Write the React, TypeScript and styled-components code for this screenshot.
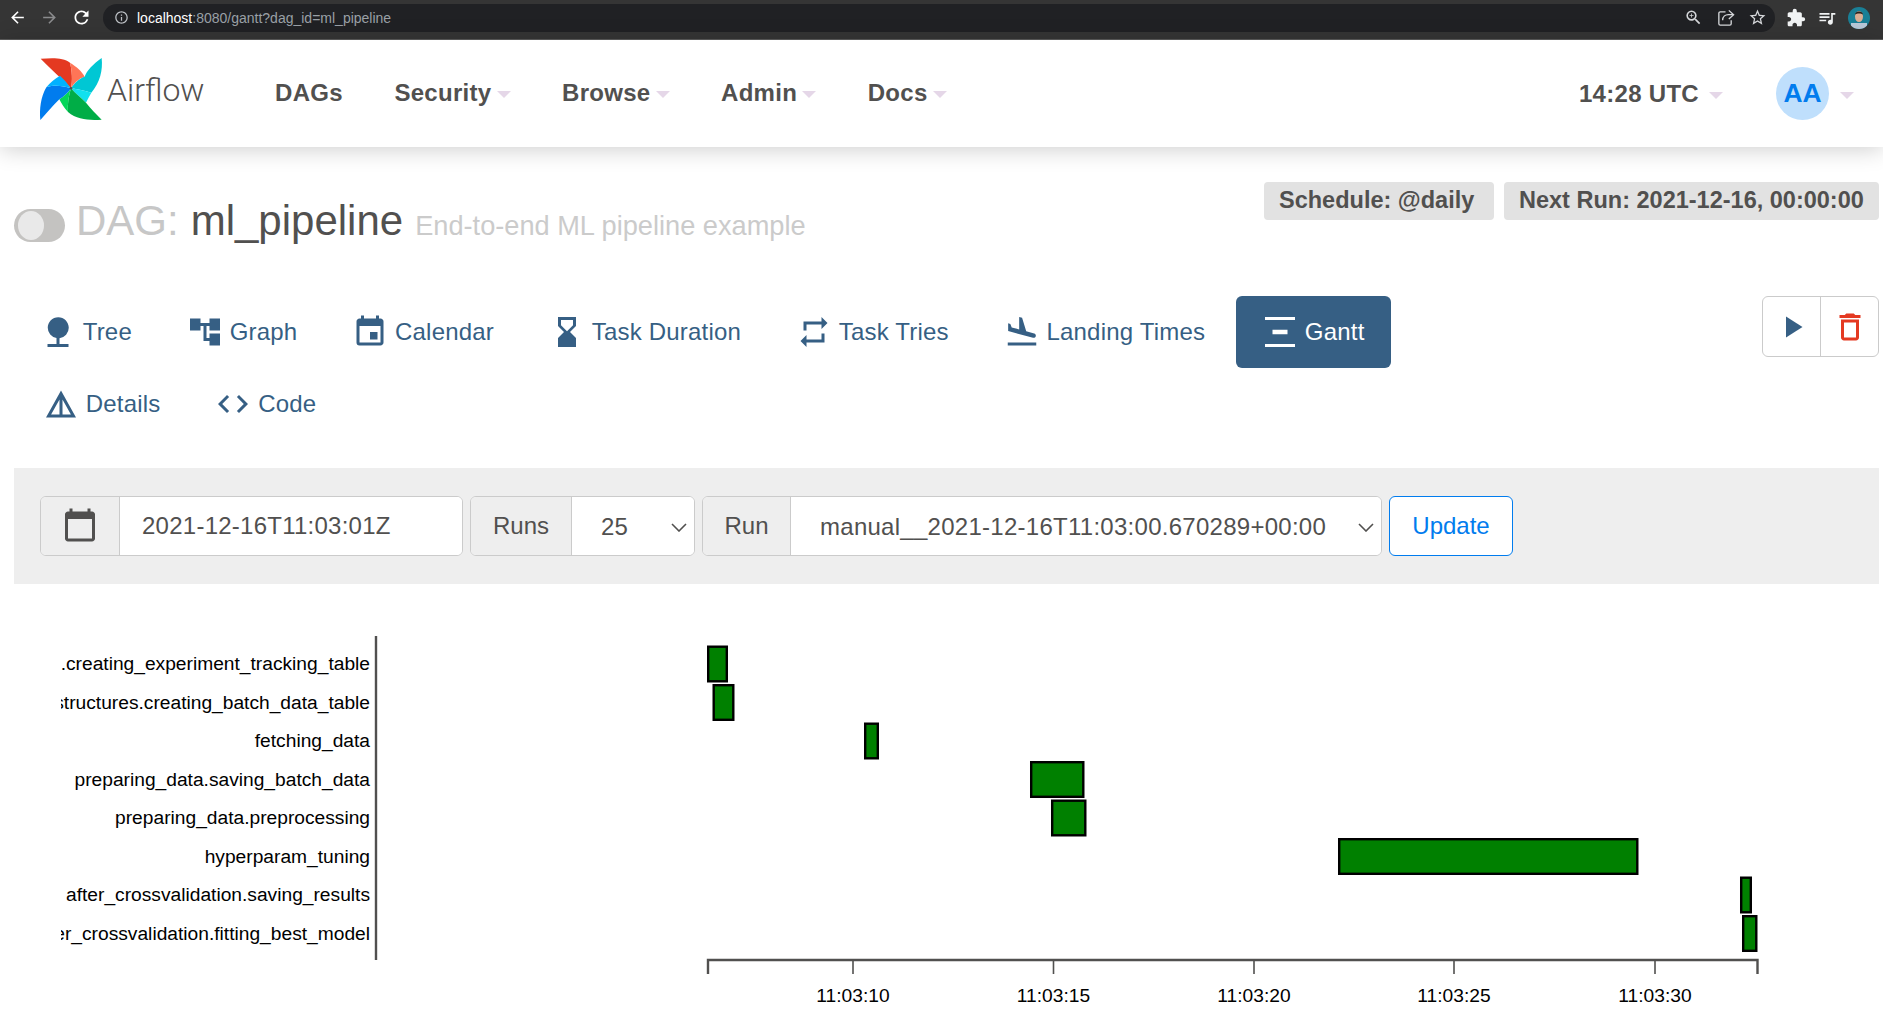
import React from "react";
import styled, { createGlobalStyle } from "styled-components";
import {
  MdAccountTree,
  MdArrowBack,
  MdArrowForward,
  MdCalendarToday,
  MdCode,
  MdDeleteOutline,
  MdDetails,
  MdEvent,
  MdExtension,
  MdFlightLand,
  MdHourglassBottom,
  MdInfoOutline,
  MdNature,
  MdPlayArrow,
  MdQueueMusic,
  MdRefresh,
  MdRepeat,
  MdStarBorder,
  MdVerticalDistribute,
  MdZoomIn,
} from "react-icons/md";

const Global = createGlobalStyle`
  html, body { margin: 0; padding: 0; height: 1011px; overflow: hidden; background: #fff; }
  body { font-family: "Liberation Sans", Arial, sans-serif; color: #51504f; }
  * { box-sizing: border-box; }
`;

const Page = styled.div`
  width: 1883px;
  height: 1011px;
  overflow: hidden;
`;

const BrowserBar = styled.div`
  height: 40px;
  background: #353535;
  border-bottom: 1px solid #5c5c5c;
  display: flex;
  align-items: center;
  padding: 0 9px 4px 1px;
  color: #fff;
`;

const BrowserButton = styled.span<{ $dim?: boolean }>`
  width: 32px;
  display: flex;
  justify-content: center;
  color: ${(p) => (p.$dim ? "#8a8b8d" : "#fff")};
`;

const Omnibox = styled.div`
  margin-left: 6px;
  width: 1672px;
  height: 28px;
  border-radius: 14px;
  background: #202124;
  display: flex;
  align-items: center;
  padding: 0 8px 0 11px;
`;

const InfoIcon = styled.span`
  display: flex;
  color: #bdc1c6;
  margin-right: 8px;
`;

const UrlHost = styled.span`
  color: #fff;
  font-size: 14px;
`;

const UrlRest = styled.span`
  color: #9aa0a6;
  font-size: 14px;
`;

const OmniIcons = styled.div`
  margin-left: auto;
  display: flex;
  gap: 13px;
  color: #d5d7da;
`;

const ExtensionIcons = styled.div`
  display: flex;
  align-items: center;
  margin-left: 11px;
  gap: 11px;
  color: #f1f3f4;
`;

const Navbar = styled.nav`
  position: relative;
  height: 107px;
  background: #fff;
  box-shadow: 0 2px 22px rgba(0, 0, 0, 0.2);
  display: flex;
  align-items: center;
  padding: 0 29px 0 40px;
`;

const Brand = styled.div`
  display: flex;
  align-items: center;
  width: 235px;
  margin-top: -7px;
`;

const BrandName = styled.span`
  font-family: Roboto, "Liberation Sans", sans-serif;
  font-size: 32px;
  font-weight: 300;
  color: #51504f;
  margin-left: 4px;
  margin-top: 0;
`;

const Menu = styled.div`
  display: flex;
  align-items: center;
  gap: 51.5px;
  margin-top: -2px;
`;

const MenuItem = styled.span`
  display: inline-flex;
  align-items: center;
  font-size: 24px;
  font-weight: 700;
  letter-spacing: 0.3px;
  color: #51504f;
`;

const Caret = styled.i<{ $gap?: number }>`
  display: inline-block;
  width: 0;
  height: 0;
  margin-left: ${(p) => p.$gap ?? 5}px;
  margin-top: 4px;
  border-left: 7px solid transparent;
  border-right: 7px solid transparent;
  border-top: 7px solid #e5d7e8;
`;

const NavRight = styled.div`
  margin-left: auto;
  display: flex;
  align-items: center;
`;

const Avatar = styled.span`
  width: 53px;
  height: 53px;
  margin-left: 53px;
  border-radius: 50%;
  background: #bfdffc;
  color: #017cee;
  font-size: 26.4px;
  font-weight: 700;
  display: flex;
  align-items: center;
  justify-content: center;
`;

const Content = styled.main`
  padding: 35px 4px 0 14px;
`;

const TitleRow = styled.div`
  display: flex;
  justify-content: space-between;
  align-items: flex-start;
  height: 114px;
`;

const Title = styled.h4`
  margin: 16px 0 0;
  display: flex;
  align-items: baseline;
  font-size: 42px;
  font-weight: 400;
  line-height: 46px;
  color: #c7c7c7;
`;

const Toggle = styled.span`
  align-self: center;
  width: 51px;
  height: 33px;
  margin-top: 4px;
  margin-right: 11px;
  border-radius: 17px;
  background: #c4c3c1;
  display: flex;
  align-items: center;
  padding-left: 4px;
`;

const Knob = styled.span`
  width: 26px;
  height: 29px;
  border-radius: 50%;
  background: #e9e9e9;
`;

const DagName = styled.span`
  color: #51504f;
  margin-left: 12px;
`;

const Subtitle = styled.small`
  font-size: 27.2px;
  color: #cbcbcb;
  margin-left: 12px;
`;

const Badges = styled.div`
  display: flex;
  gap: 10px;
`;

const Badge = styled.span<{ $width: number }>`
  width: ${(p) => p.$width}px;
  height: 38px;
  padding-left: 15px;
  border-radius: 4px;
  background: #e2e2e2;
  font-size: 23.5px;
  font-weight: 700;
  line-height: 36px;
  color: #51504f;
  white-space: nowrap;
`;

const TabRow = styled.div`
  display: flex;
  justify-content: space-between;
  align-items: flex-start;
  height: 172px;
`;

const TabList = styled.div`
  display: flex;
  flex-wrap: wrap;
  gap: 0 7px;
  width: 1390px;
  padding-left: 2px;
`;

const Tab = styled.a<{ $active?: boolean; $indent?: number }>`
  height: 72px;
  padding: 0 ${(p) => (p.$active ? 26 : 24)}px;
  margin-left: ${(p) => p.$indent ?? 0}px;
  border-radius: 6px;
  display: inline-flex;
  align-items: center;
  gap: 6.7px;
  font-size: 24px;
  letter-spacing: 0.2px;
  color: ${(p) => (p.$active ? "#fff" : "#365f84")};
  background: ${(p) => (p.$active ? "#365f84" : "transparent")};
`;

const ActionGroup = styled.div`
  display: flex;
  width: 117px;
  height: 61px;
  border: 1px solid #cbcbcb;
  border-radius: 6px;
`;

const ActionButton = styled.span<{ $danger?: boolean }>`
  flex: 1;
  display: flex;
  align-items: center;
  justify-content: center;
  color: ${(p) => (p.$danger ? "#e43921" : "#365f84")};
  & + & {
    border-left: 1px solid #cbcbcb;
  }
`;

const FilterPanel = styled.form`
  height: 116px;
  background: #eeeeee;
  display: flex;
  align-items: center;
  gap: 7px;
  padding: 0 26px;
  font-size: 24px;
`;

const Group = styled.div<{ $width: number }>`
  position: relative;
  display: flex;
  width: ${(p) => p.$width}px;
  height: 60px;
  border: 1px solid #cbcbcb;
  border-radius: 6px;
  overflow: hidden;
  background: #fff;
`;

const Addon = styled.span<{ $width: number }>`
  flex: 0 0 ${(p) => p.$width}px;
  background: #eeeeee;
  border-right: 1px solid #cbcbcb;
  display: flex;
  align-items: center;
  justify-content: center;
  color: #51504f;
  svg {
    margin-top: -2px;
  }
`;

const DateInput = styled.input`
  flex: 1;
  min-width: 0;
  border: 0;
  outline: 0;
  padding: 0 22px;
  font: inherit;
  letter-spacing: 0.25px;
  color: #51504f;
  background: #fff;
`;

const Select = styled.select<{ $pad: number }>`
  flex: 1;
  min-width: 0;
  border: 0;
  outline: 0;
  appearance: none;
  padding: 0 0 0 ${(p) => p.$pad}px;
  font: inherit;
  letter-spacing: 0.27px;
  color: #51504f;
  background: #fff;
`;

const Chevron = styled.svg`
  position: absolute;
  right: 7px;
  top: 26px;
  width: 16px;
  height: 9px;
  fill: none;
  stroke: #51504f;
  stroke-width: 1.6;
  pointer-events: none;
`;

const UpdateButton = styled.button`
  width: 124px;
  height: 60px;
  border: 1px solid #017cee;
  border-radius: 6px;
  background: #fff;
  color: #017cee;
  font: inherit;
`;

const Chart = styled.svg`
  display: block;
  margin-top: 36px;
`;

const BarRect = styled.rect`
  fill: #008000;
  stroke: #000;
  stroke-width: 2.4;
`;

const RowLabel = styled.text`
  font-family: "Liberation Sans", Arial, sans-serif;
  font-size: 19.2px;
  fill: #000;
  text-anchor: end;
`;

const TickLabel = styled.text`
  font-family: "Liberation Sans", Arial, sans-serif;
  font-size: 19.2px;
  fill: #000;
  text-anchor: middle;
`;

const AxisLine = styled.path`
  fill: none;
  stroke: #51504f;
  stroke-width: 2.4;
`;

const Tick = styled.line`
  stroke: #51504f;
  stroke-width: 1.6;
`;

const Logo = () => (
  <svg width="72" height="72" viewBox="0 0 216 216" style={{ margin: "0 -5px 0 -4px" }}>
    <path d="M14 14C50 12 82 10 102 26C108 50 110 80 105 103C88 85 60 60 14 14Z" fill="#e43921" />
    <path d="M102 26C122 38 138 52 146 68C128 74 114 86 105 103C110 80 108 50 102 26Z" fill="#ff7557" />
    <path d="M197 12C201 50 192 85 166 116C146 110 124 106 105 103C115 88 128 74 146 68C152 50 172 30 197 12Z" fill="#00c7d4" />
    <path d="M105 103C124 106 146 110 166 116C160 126 155 136 150 146C135 132 118 118 105 103Z" fill="#11e1ee" />
    <path d="M197 197C160 199 124 198 96 174C94 150 98 126 105 103C118 118 135 132 150 146C165 165 180 180 197 197Z" fill="#00ad46" />
    <path d="M105 103C98 126 94 150 96 174C84 162 76 148 70 136C84 128 96 116 105 103Z" fill="#04d659" />
    <path d="M13 198C10 165 14 130 31 100C56 92 82 96 105 103C96 116 84 128 70 136C50 156 32 178 13 198Z" fill="#017cee" />
    <path d="M31 100C42 86 56 74 72 65C84 76 96 90 105 103C82 96 56 92 31 100Z" fill="#00b2ff" />
    <circle cx="105" cy="103" r="4" fill="#51504f" />
  </svg>
);

const ProfilePhoto = () => (
  <svg width="22" height="22" viewBox="0 0 22 22">
    <defs>
      <clipPath id="profile-clip">
        <circle cx="11" cy="11" r="11" />
      </clipPath>
    </defs>
    <g clipPath="url(#profile-clip)">
      <rect width="22" height="22" fill="#1a7f96" />
      <rect x="3" y="16" width="16" height="6" fill="#b9c8d8" />
      <ellipse cx="11" cy="9.5" rx="4" ry="5.5" fill="#dcae93" />
      <path d="M7 7.5C7 3.5 15 3.5 15 7.5C13 6 9 6 7 7.5Z" fill="#2a2320" />
    </g>
  </svg>
);

const ShareIcon = () => (
  <svg width="19" height="19" viewBox="0 0 20 20" fill="none" stroke="currentColor" strokeWidth="1.4">
    <path d="M10 4H4.5A1.5 1.5 0 0 0 3 5.5v11A1.5 1.5 0 0 0 4.5 18h10a1.5 1.5 0 0 0 1.5-1.5V13" />
    <path d="M7 13c0-4 3-6 6-6h5" />
    <path d="M13.5 2.5L18.5 7l-5 4.5" />
  </svg>
);

const SelectChevron = () => (
  <Chevron viewBox="0 0 16 9">
    <path d="M1 1l7 7 7-7" />
  </Chevron>
);

const tabs = [
  { label: "Tree", Icon: MdNature },
  { label: "Graph", Icon: MdAccountTree },
  { label: "Calendar", Icon: MdEvent },
  { label: "Task Duration", Icon: MdHourglassBottom },
  { label: "Task Tries", Icon: MdRepeat },
  { label: "Landing Times", Icon: MdFlightLand },
  { label: "Gantt", Icon: MdVerticalDistribute, active: true },
  { label: "Details", Icon: MdDetails, indent: 3 },
  { label: "Code", Icon: MdCode },
];

const rows = [
  { label: "data_structures.creating_experiment_tracking_table", x1: 707, x2: 728 },
  { label: "data_structures.creating_batch_data_table", x1: 712.5, x2: 734.5 },
  { label: "fetching_data", x1: 864, x2: 879 },
  { label: "preparing_data.saving_batch_data", x1: 1030, x2: 1084.5 },
  { label: "preparing_data.preprocessing", x1: 1051, x2: 1086.5 },
  { label: "hyperparam_tuning", x1: 1338, x2: 1638.5 },
  { label: "after_crossvalidation.saving_results", x1: 1740, x2: 1752 },
  { label: "after_crossvalidation.fitting_best_model", x1: 1742, x2: 1757.5 },
];

const ticks = [
  { x: 853, label: "11:03:10" },
  { x: 1053.5, label: "11:03:15" },
  { x: 1254, label: "11:03:20" },
  { x: 1454, label: "11:03:25" },
  { x: 1655, label: "11:03:30" },
];

const ROW_TOP = 645.5;
const ROW_PITCH = 38.5;
const BAR_HEIGHT = 37;

export default function App() {
  return (
    <Page>
      <Global />
      <BrowserBar>
        <BrowserButton>
          <MdArrowBack size={19} />
        </BrowserButton>
        <BrowserButton $dim>
          <MdArrowForward size={19} />
        </BrowserButton>
        <BrowserButton>
          <MdRefresh size={21} />
        </BrowserButton>
        <Omnibox>
          <InfoIcon>
            <MdInfoOutline size={15} />
          </InfoIcon>
          <UrlHost>localhost</UrlHost>
          <UrlRest>:8080/gantt?dag_id=ml_pipeline</UrlRest>
          <OmniIcons>
            <MdZoomIn size={19} />
            <ShareIcon />
            <MdStarBorder size={19} />
          </OmniIcons>
        </Omnibox>
        <ExtensionIcons>
          <MdExtension size={20} />
          <MdQueueMusic size={20} />
          <ProfilePhoto />
        </ExtensionIcons>
      </BrowserBar>

      <Navbar>
        <Brand>
          <Logo />
          <BrandName>Airflow</BrandName>
        </Brand>
        <Menu>
          <MenuItem>DAGs</MenuItem>
          <MenuItem>
            Security
            <Caret />
          </MenuItem>
          <MenuItem>
            Browse
            <Caret />
          </MenuItem>
          <MenuItem>
            Admin
            <Caret />
          </MenuItem>
          <MenuItem>
            Docs
            <Caret />
          </MenuItem>
        </Menu>
        <NavRight>
          <MenuItem>
            14:28 UTC
            <Caret $gap={10} />
          </MenuItem>
          <Avatar>AA</Avatar>
          <Caret $gap={11} />
        </NavRight>
      </Navbar>

      <Content>
        <TitleRow>
          <Title>
            <Toggle>
              <Knob />
            </Toggle>
            DAG:
            <DagName>ml_pipeline</DagName>
            <Subtitle>End-to-end ML pipeline example</Subtitle>
          </Title>
          <Badges>
            <Badge $width={230}>Schedule: @daily</Badge>
            <Badge $width={375}>Next Run: 2021-12-16, 00:00:00</Badge>
          </Badges>
        </TitleRow>

        <TabRow>
          <TabList>
            {tabs.map(({ label, Icon, active, indent }) => (
              <Tab key={label} $active={active} $indent={indent}>
                <Icon size={36} />
                {label}
              </Tab>
            ))}
          </TabList>
          <ActionGroup>
            <ActionButton>
              <MdPlayArrow size={36} />
            </ActionButton>
            <ActionButton $danger>
              <MdDeleteOutline size={36} />
            </ActionButton>
          </ActionGroup>
        </TabRow>

        <FilterPanel>
          <Group $width={423}>
            <Addon $width={79}>
              <MdCalendarToday size={36} />
            </Addon>
            <DateInput readOnly value="2021-12-16T11:03:01Z" />
          </Group>
          <Group $width={225}>
            <Addon $width={101}>Runs</Addon>
            <Select $pad={29} defaultValue="25">
              <option>25</option>
            </Select>
            <SelectChevron />
          </Group>
          <Group $width={680}>
            <Addon $width={88}>Run</Addon>
            <Select $pad={29} defaultValue="run">
              <option value="run">manual__2021-12-16T11:03:00.670289+00:00</option>
            </Select>
            <SelectChevron />
          </Group>
          <UpdateButton type="button">Update</UpdateButton>
        </FilterPanel>

        <Chart width="1865" height="391" viewBox="14 620 1865 391">
          <defs>
            <clipPath id="label-clip">
              <rect x="61" y="630" width="312" height="330" />
            </clipPath>
          </defs>
          <g clipPath="url(#label-clip)">
            {rows.map((row, i) => (
              <RowLabel key={row.label} x={370} y={ROW_TOP + i * ROW_PITCH + 24.5}>
                {row.label}
              </RowLabel>
            ))}
          </g>
          <AxisLine d="M376 636V960" />
          {rows.map((row, i) => (
            <BarRect
              key={row.label}
              x={row.x1 + 1.2}
              y={ROW_TOP + i * ROW_PITCH + 1.2}
              width={row.x2 - row.x1 - 2.4}
              height={BAR_HEIGHT - 2.4}
            />
          ))}
          <AxisLine d="M708 974V960H1757.5V974" />
          {ticks.map((tick) => (
            <g key={tick.label}>
              <Tick x1={tick.x} x2={tick.x} y1={960} y2={974} />
              <TickLabel x={tick.x} y={1002}>
                {tick.label}
              </TickLabel>
            </g>
          ))}
        </Chart>
      </Content>
    </Page>
  );
}
